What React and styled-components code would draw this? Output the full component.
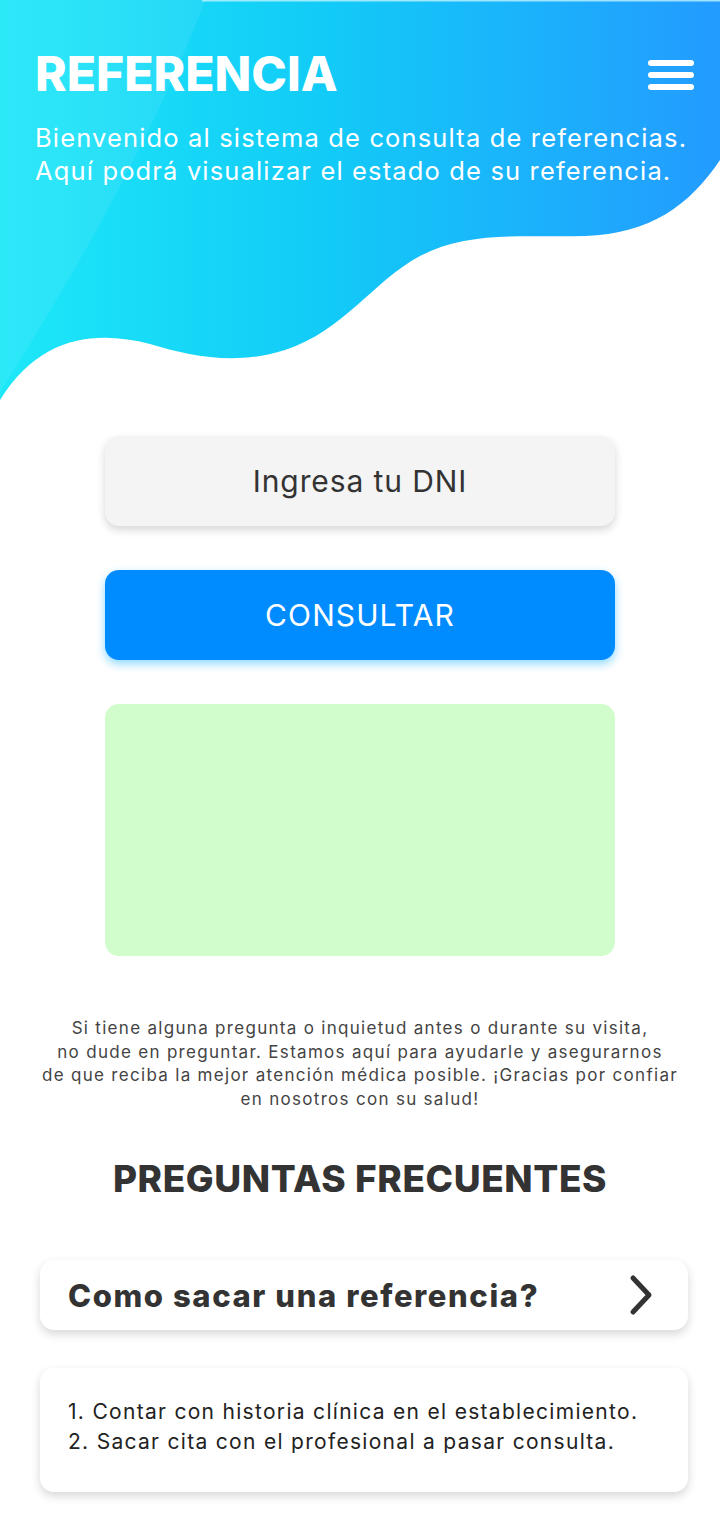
import React from 'react';
import styled, { createGlobalStyle } from 'styled-components';

const GlobalStyle = createGlobalStyle`
  body {
    margin: 0;
    background: #fff;
    font-family: "Inter", "Noto Sans", sans-serif;
  }
`;

const Page = styled.div`
  width: 720px;
  min-height: 1520px;
  background: #fff;
`;

const Header = styled.header`
  position: relative;
  height: 400px;
  padding: 50px 26px 0 35px;
  box-sizing: border-box;
`;

const Wave = styled.svg`
  position: absolute;
  top: 0;
  left: 0;
  width: 720px;
  height: 400px;
  z-index: 0;
`;

const TopRow = styled.div`
  position: relative;
  z-index: 1;
  display: flex;
  justify-content: space-between;
  align-items: flex-start;
`;

const Title = styled.h1`
  margin: 0;
  font-size: 48px;
  line-height: 1;
  font-weight: 800;
  color: #fff;
`;

const Burger = styled.div`
  display: flex;
  flex-direction: column;
  gap: 6px;
  margin-top: 10px;
`;

const BurgerLine = styled.span`
  display: block;
  width: 46px;
  height: 6px;
  border-radius: 3px;
  background: #fff;
`;

const Intro = styled.p`
  position: relative;
  z-index: 1;
  margin: 23px 0 0;
  font-size: 25.5px;
  line-height: 33px;
  letter-spacing: 1.15px;
  color: #fff;
`;

const Main = styled.main`
  display: flex;
  flex-direction: column;
  align-items: center;
  padding: 36px 0 0;
`;

const Field = styled.div`
  width: 510px;
  height: 90px;
  border-radius: 14px;
  background: #f4f4f4;
  box-shadow: 0 4px 8px rgba(0, 0, 0, 0.16);
  display: flex;
  align-items: center;
  justify-content: center;
  font-size: 30px;
  letter-spacing: 0.9px;
  color: #333;
`;

const Button = styled.button`
  margin-top: 44px;
  width: 510px;
  height: 90px;
  border: 0;
  border-radius: 14px;
  background: #008cff;
  box-shadow: 0 4px 10px rgba(0, 170, 255, 0.45);
  font-family: inherit;
  font-size: 30px;
  letter-spacing: 1.1px;
  color: #fff;
`;

const Result = styled.div`
  margin-top: 44px;
  width: 510px;
  height: 252px;
  border-radius: 14px;
  background: #d0fdcb;
`;

const Note = styled.p`
  margin: 61px 0 0;
  width: 680px;
  text-align: center;
  font-size: 17px;
  line-height: 23.5px;
  letter-spacing: 1.3px;
  color: #444;
`;

const SectionTitle = styled.h2`
  margin: 45px 0 0;
  font-size: 37px;
  font-weight: 800;
  line-height: normal;
  color: #333;
  letter-spacing: 0.6px;
`;

const Card = styled.div`
  width: 648px;
  box-sizing: border-box;
  margin: ${p => p.$gap}px 0 0 8px;
  border-radius: 14px;
  background: #fff;
  box-shadow: 0 4px 10px rgba(0, 0, 0, 0.16);
  padding: ${p => p.$pad};
`;

const QuestionRow = styled.div`
  display: flex;
  align-items: center;
  justify-content: space-between;
  height: 70px;
`;

const Question = styled.span`
  font-size: 31px;
  font-weight: 800;
  letter-spacing: 1.6px;
  color: #333;
`;

const Answer = styled.p`
  margin: 0;
  font-size: 21px;
  line-height: 29.5px;
  letter-spacing: 1.3px;
  color: #222;
`;

const Chevron = () => (
  <svg width="32" height="44" viewBox="0 0 32 44">
    <path d="M9 5 L25 22 L9 39" fill="none" stroke="#333" strokeWidth="5" strokeLinecap="round" strokeLinejoin="round" />
  </svg>
);

export default function App() {
  return (
    <Page>
      <GlobalStyle />
      <Header>
        <Wave viewBox="0 0 720 400">
          <defs>
            <linearGradient id="hdr" x1="0" y1="0" x2="1" y2="0">
              <stop offset="0" stopColor="#1de8f8" />
              <stop offset="0.45" stopColor="#12cbf7" />
              <stop offset="1" stopColor="#239bff" />
            </linearGradient>
          </defs>
          <path
            d="M0 0 H720 V160 C690 205 650 234 585 236 C525 238 470 230 420 256 C372 282 345 330 285 350 C235 366 190 356 150 344 C95 330 40 336 0 400 Z"
            fill="url(#hdr)"
          />
          <path d="M0 0 H205 C160 120 90 250 0 392 Z" fill="#ffffff" opacity="0.07" />
          <rect x="202" y="0" width="518" height="1.5" fill="#bff3ff" opacity="0.8" />
        </Wave>
        <TopRow>
          <Title>REFERENCIA</Title>
          <Burger>
            <BurgerLine />
            <BurgerLine />
            <BurgerLine />
          </Burger>
        </TopRow>
        <Intro>
          Bienvenido al sistema de consulta de referencias.
          <br />
          Aquí podrá visualizar el estado de su referencia.
        </Intro>
      </Header>
      <Main>
        <Field>Ingresa tu DNI</Field>
        <Button>CONSULTAR</Button>
        <Result />
        <Note>
          Si tiene alguna pregunta o inquietud antes o durante su visita,
          <br />
          no dude en preguntar. Estamos aquí para ayudarle y asegurarnos
          <br />
          de que reciba la mejor atención médica posible. ¡Gracias por confiar
          <br />
          en nosotros con su salud!
        </Note>
        <SectionTitle>PREGUNTAS FRECUENTES</SectionTitle>
        <Card $gap={59} $pad="0 32px 0 28px">
          <QuestionRow>
            <Question>Como sacar una referencia?</Question>
            <Chevron />
          </QuestionRow>
        </Card>
        <Card $gap={38} $pad="29px 28px 36px">
          <Answer>
            1. Contar con historia clínica en el establecimiento.
            <br />
            2. Sacar cita con el profesional a pasar consulta.
          </Answer>
        </Card>
      </Main>
    </Page>
  );
}
